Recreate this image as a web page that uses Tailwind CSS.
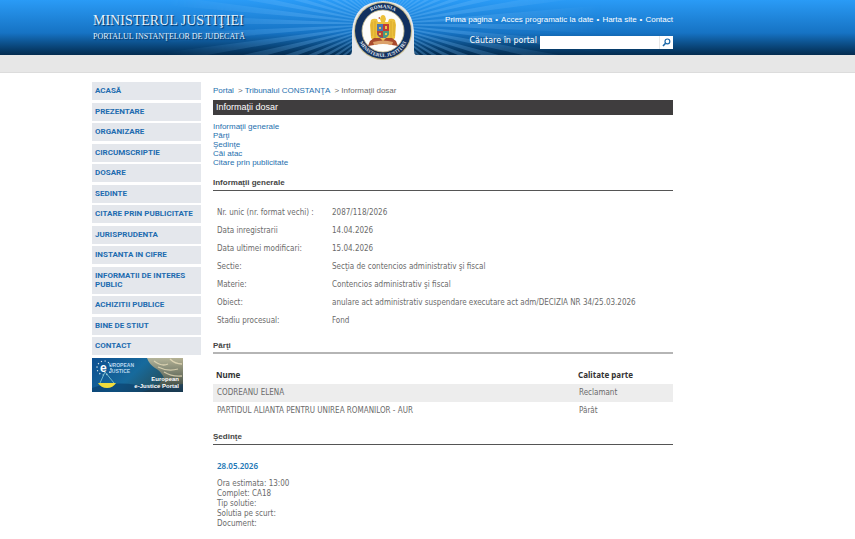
<!DOCTYPE html>
<html lang="ro">
<head>
  <meta charset="UTF-8">
  <meta name="viewport" content="width=device-width, initial-scale=1.0">
  <title>Informaţii dosar</title>
  <script src="https://cdn.jsdelivr.net/npm/@tailwindcss/browser@4"></script>
</head>
<body class="bg-white font-['Liberation_Sans',sans-serif] text-[8px] leading-[9px] text-[#6b6b6b]">
  <header class="relative border-b border-[#dcdcdc] bg-[#e7e7e7] pb-[17px]">
    <div class="relative overflow-hidden bg-linear-to-b from-[#2a9bf6] via-[#1673c4] via-60% to-[#042c50]">
      <div class="relative mx-auto flex max-w-[671px] pr-[90px]">
        <!-- sun rays behind the emblem -->
        <svg class="pointer-events-none absolute -top-[226px] left-[41px] h-[500px] w-[500px] max-w-none" viewBox="0 0 500 500" aria-hidden="true">
          <defs>
            <radialGradient id="fade">
              <stop offset="0" stop-color="#fff" stop-opacity=".35"/>
              <stop offset=".4" stop-color="#fff" stop-opacity=".25"/>
              <stop offset="1" stop-color="#fff" stop-opacity="0"/>
            </radialGradient>
            <mask id="rays" maskUnits="userSpaceOnUse" x="0" y="0" width="500" height="500"><circle cx="250" cy="250" r="220" fill="url(#fade)"/></mask>
          </defs>
          <circle cx="250" cy="250" r="110" fill="none" stroke="#7cc4ff" stroke-width="220" pathLength="144" stroke-dasharray="1 1" mask="url(#rays)"/>
        </svg>
        <div class="relative grow pt-3 pb-[11px] pl-px font-['Liberation_Serif',serif] whitespace-nowrap text-[#e3f2ff] text-shadow-[1px_1px_1px_#00305f]">
          <h1 class="text-[14px] leading-[17px]">MINISTERUL JUSTIŢIEI</h1>
          <p class="text-[8px] leading-[15px]">PORTALUL INSTANŢELOR DE JUDECATĂ</p>
        </div>
        <div class="relative flex flex-col items-end pt-[15px] text-white">
          <nav class="flex gap-[3px] text-[8px] whitespace-nowrap">
            <a href="#">Prima pagina</a><span>•</span>
            <a href="#">Acces programatic la date</a><span>•</span>
            <a href="#">Harta site</a><span>•</span>
            <a href="#">Contact</a>
          </nav>
          <form class="mt-3 flex items-start gap-[3px]">
            <label for="q" class="font-['DejaVu_Sans',sans-serif] text-[8px] leading-[10px]">Căutare în portal</label>
            <div class="flex h-[13px] w-[133px] bg-white">
              <input id="q" type="text" class="w-[120px] border-r border-[#e8e8e8] px-1 text-[8px] text-gray-700 outline-none">
              <button type="submit" aria-label="Caută" class="flex grow items-center justify-center">
                <svg class="h-[9px] w-[9px]" viewBox="0 0 9 9" fill="none" stroke="#1c68a8" aria-hidden="true">
                  <circle cx="5.4" cy="3.4" r="2.4" stroke-width="1.2"/>
                  <path d="M3.6 5.2 1 8" stroke-width="1.6"/>
                </svg>
              </button>
            </div>
          </form>
        </div>
      </div>
    </div>
    <!-- emblem on its grey tab -->
    <div class="pointer-events-none absolute inset-x-0 top-0 mx-auto max-w-[671px]">
      <svg class="ml-[258px] h-[64px] w-[66px]" viewBox="0 0 66 64" role="img" aria-label="România, Ministerul Justiţiei">
        <path d="M0 55Q2 54 2 51V31Q4 2 33 1 62 2 64 31V51Q64 54 66 55V60H0Z" fill="#e4e7ea"/>
        <circle cx="33" cy="31" r="29" fill="#c9bd8e"/>
        <circle cx="33" cy="31" r="28" fill="#12315f"/>
        <circle cx="33" cy="31" r="21" fill="#fdfdfb" stroke="#c9bd8e" stroke-width=".8"/>
        <path id="arcTop" d="M10 31A23 23 0 0 1 56 31" fill="none"/>
        <path id="arcBottom" d="M7 31A26 26 0 0 0 59 31" fill="none"/>
        <g fill="#e6edf5" font-family="Liberation Serif, serif" font-weight="700" font-size="5" text-anchor="middle">
          <text><textPath href="#arcTop" startOffset="50%">ROMANIA</textPath></text>
          <text><textPath href="#arcBottom" startOffset="50%">MINISTERUL JUSTIŢIEI</textPath></text>
        </g>
        <!-- eagle -->
        <path d="M31 16q2-2 4 0l1 3-1 3h3l1-3q4-1 6 1l1 5-1 13-3 3H24l-3-3-1-13 1-5q2-2 6-1l1 3h3l-1-3Z" fill="#ecc03a"/>
        <path d="M22 22v14M25 21v17M41 21v17M44 22v14" stroke="#d6a22c" stroke-width=".8"/>
        <path d="M30 17l-2 1 2 1Z" fill="#b5452c"/>
        <path d="M27 24h12v9q0 4-6 6-6-2-6-6Z" fill="#4c78ad"/>
        <path d="M33 24h6v7h-6Z" fill="#c23c31"/>
        <path d="M27 31h6v7q-6-2-6-5Z" fill="#b5443a"/>
        <path d="M33 31h6v2q0 4-6 5Z" fill="#4b9a80"/>
        <path d="M29 27h2v2h-2ZM35 26h2v3h-2ZM29 33h2v2h-2ZM35 33h2v2h-2Z" fill="#e9c54b"/>
        <path d="M24 38h18l4 3 2 5-6-1-9-2-9 2-6 1 2-5Z" fill="#a84a2d"/>
        <path d="M23 42q10-3 20 0l-1 3q-9-2-18 0Z" fill="#dba068"/>
        <path d="M30 38h6l-3 3Z" fill="#efc353"/>
      </svg>
    </div>
  </header>

  <div class="mx-auto flex max-w-[671px] gap-3 pr-[90px] pt-[9px]">
    <aside class="w-[109px] shrink-0 text-[#1e6cb0]">
      <ul class="font-[Roboto,sans-serif] font-bold [&>li]:mb-[2px] [&>li]:bg-[#e4e7ec] [&>li]:px-[3px] [&>li]:pt-1 [&>li]:pb-[5px] [&>li:nth-child(odd)]:mb-[3px]">
        <li><a href="#">ACASĂ</a></li>
        <li><a href="#">PREZENTARE</a></li>
        <li><a href="#">ORGANIZARE</a></li>
        <li><a href="#">CIRCUMSCRIPTIE</a></li>
        <li><a href="#">DOSARE</a></li>
        <li><a href="#">SEDINTE</a></li>
        <li><a href="#">CITARE PRIN PUBLICITATE</a></li>
        <li><a href="#">JURISPRUDENTA</a></li>
        <li><a href="#">INSTANTA IN CIFRE</a></li>
        <li><a href="#">INFORMATII DE INTERES PUBLIC</a></li>
        <li><a href="#">ACHIZITII PUBLICE</a></li>
        <li><a href="#">BINE DE STIUT</a></li>
        <li><a href="#">CONTACT</a></li>
      </ul>
      <a href="#" class="block">
        <svg class="h-[34px] w-[91px]" viewBox="0 0 91 34" role="img" aria-label="European e-Justice Portal">
          <defs>
            <linearGradient id="sea" x2="1" y2=".4">
              <stop offset="0" stop-color="#0d4f91"/>
              <stop offset=".55" stop-color="#176a9c"/>
              <stop offset="1" stop-color="#274a50"/>
            </linearGradient>
            <linearGradient id="stone" y2="1" x2="0">
              <stop offset="0" stop-color="#cfc29b"/>
              <stop offset="1" stop-color="#2c3a36"/>
            </linearGradient>
          </defs>
          <path d="M0 0h91v34H0Z" fill="url(#sea)"/>
          <path d="M55 0h36v34H50q16-4 22-14-3-7-9-10-6-4-8-10Z" fill="url(#stone)" opacity=".85"/>
          <path d="M62 3q8 6 14 3M66 9q10 5 20 2M72 14q8 5 18 4M78 1q5 5 12 5" stroke="#f2e6c2" stroke-width="1.3" fill="none" opacity=".7"/>
          <path d="M0 30q20-7 45-3 20 4 46-1v8H0Z" fill="#083765" opacity=".55"/>
          <circle cx="12" cy="10" r="7" fill="none" stroke="#d7e4e8" stroke-width="1.2" stroke-dasharray="1.2 2.5"/>
          <path d="M13 14 8 25M13 14l9 11" stroke="#7bc3d4" stroke-width=".9"/>
          <path d="M6 25h18q-3 5-9 5t-9-5Z" fill="#f1dc3c"/>
          <g font-family="Liberation Sans, sans-serif" font-weight="700" fill="#fff">
            <text x="8" y="14" font-size="12">e</text>
            <text x="17" y="9" font-size="5" fill="#b9d7ee">UROPEAN</text>
            <text x="17" y="15" font-size="5" fill="#b9d7ee">JUSTICE</text>
            <g font-size="6" text-anchor="end">
              <text x="87" y="23">European</text>
              <text x="87" y="30">e-Justice Portal</text>
            </g>
          </g>
        </svg>
      </a>
    </aside>

    <main class="grow pt-1">
      <nav class="flex gap-1">
        <a href="#" class="text-[#1e6fae]">Portal</a>
        <span>&gt; <a href="#" class="text-[#1e6fae]">Tribunalul CONSTANŢA</a></span>
        <span>&gt; Informaţii dosar</span>
      </nav>
      <h2 class="mt-[5px] bg-[#3f3d3e] px-[3px] text-[9px] leading-[15px] text-white">Informaţii dosar</h2>
      <ul class="mt-[7px] text-[#1e6fae]">
        <li><a href="#generale">Informaţii generale</a></li>
        <li><a href="#parti">Părţi</a></li>
        <li><a href="#sedinte">Şedinţe</a></li>
        <li><a href="#">Căi atac</a></li>
        <li><a href="#">Citare prin publicitate</a></li>
      </ul>

      <h3 id="generale" class="mt-[11px] border-b border-[#555] pb-[3px] font-bold text-[#444]">Informaţii generale</h3>
      <table class="mt-[13px] w-full font-['DejaVu_Sans_Condensed','DejaVu_Sans',sans-serif] text-[8px] leading-[18px] [&_th]:w-[115px] [&_th]:font-normal [&_th]:text-left [&_th]:pl-1">
        <tr><th scope="row">Nr. unic (nr. format vechi) :</th><td class="pl-1">2087/118/2026</td></tr>
        <tr><th scope="row">Data inregistrarii</th><td class="pl-1">14.04.2026</td></tr>
        <tr><th scope="row">Data ultimei modificari:</th><td class="pl-1">15.04.2026</td></tr>
        <tr><th scope="row">Sectie:</th><td class="pl-1">Secţia de contencios administrativ şi fiscal</td></tr>
        <tr><th scope="row">Materie:</th><td class="pl-1">Contencios administrativ şi fiscal</td></tr>
        <tr><th scope="row">Obiect:</th><td class="pl-1">anulare act administrativ suspendare executare act adm/DECIZIA NR 34/25.03.2026</td></tr>
        <tr><th scope="row">Stadiu procesual:</th><td class="pl-1">Fond</td></tr>
      </table>

      <h3 id="parti" class="mt-[11px] border-b-2 border-[#b5b5b5] pb-[2px] font-bold text-[#444]">Părţi</h3>
      <table class="mt-3 w-full font-['DejaVu_Sans_Condensed','DejaVu_Sans',sans-serif] text-[8px] leading-[18px]">
        <thead class="font-['Noto_Sans',sans-serif] text-left text-[#333]">
          <tr><th class="pl-[3px]">Nume</th><th class="w-[96px] pl-px">Calitate parte</th></tr>
        </thead>
        <tbody>
          <tr class="bg-[#ededed]"><td class="pl-1">CODREANU ELENA</td><td class="pl-[2px]">Reclamant</td></tr>
          <tr><td class="pl-1">PARTIDUL ALIANTA PENTRU UNIREA ROMANILOR - AUR</td><td class="pl-[2px]">Pârât</td></tr>
        </tbody>
      </table>

      <h3 id="sedinte" class="mt-3 border-b border-[#555] pb-[3px] font-bold text-[#444]">Şedinţe</h3>
      <div class="mt-4 pl-1 pb-3 font-['DejaVu_Sans_Condensed','DejaVu_Sans',sans-serif] text-[8px] leading-[10px]">
        <p class="mb-2 font-['Noto_Sans',sans-serif] font-semibold text-[#2277b5]">28.05.2026</p>
        <p>Ora estimata: 13:00</p>
        <p>Complet: CA18</p>
        <p>Tip solutie:</p>
        <p>Solutia pe scurt:</p>
        <p>Document:</p>
      </div>
    </main>
  </div>
</body>
</html>
